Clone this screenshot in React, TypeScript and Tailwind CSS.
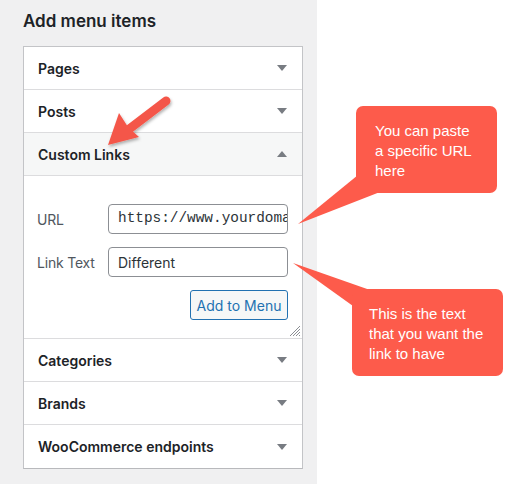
const sections = [
  { title: 'Pages', open: false },
  { title: 'Posts', open: false },
  { title: 'Custom Links', open: true },
  { title: 'Categories', open: false },
  { title: 'Brands', open: false },
  { title: 'WooCommerce endpoints', open: false },
];

function Caret({ up }: { up?: boolean }) {
  return (
    <svg width="10" height="6" viewBox="0 0 10 6" className="shrink-0">
      <polygon points={up ? '0,6 10,6 5,0' : '0,0 10,0 5,6'} fill="#787c82" />
    </svg>
  );
}

function CustomLinksBody() {
  return (
    <div className="relative border-b border-[#dcdcde] px-[13px] pt-[28px] pb-[18px]">
      <div className="flex items-center">
        <label className="w-[71px] text-[14px] tracking-[-0.2px] text-[#50575e]">URL</label>
        <div className="flex h-[30px] w-[180px] items-center overflow-hidden whitespace-nowrap rounded-[4px] border border-[#8c8f94] bg-white px-[9px] font-['Liberation_Mono',monospace] text-[14.4px] text-[#2c3338]">
          https://www.yourdomain.com
        </div>
      </div>
      <div className="mt-[13px] flex items-center">
        <label className="w-[71px] text-[14px] tracking-[-0.2px] text-[#50575e]">Link Text</label>
        <div className="flex h-[30px] w-[180px] items-center rounded-[4px] border border-[#8c8f94] bg-white px-[9px] text-[14px] text-[#2c3338]">
          Different
        </div>
      </div>
      <div className="mt-[13px] flex justify-end pr-[1px]">
        <button className="h-[30px] w-[98px] rounded-[3px] border border-[#2271b1] bg-[#f6f7f7] text-[14px] text-[#2271b1]">
          Add to Menu
        </button>
      </div>
      <svg width="12" height="12" viewBox="0 0 12 12" className="absolute right-[1px] bottom-[1px]">
        <path d="M11 1 L1 11 M11 4 L4 11 M11 7 L7 11 M11 10 L10 11" stroke="#8c8f94" strokeWidth="1" />
      </svg>
    </div>
  );
}

function MenuPanel() {
  return (
    <div className="h-[484px] w-[317px] bg-[#f0f0f1] pl-[23px] pt-[9px] font-['Inter',sans-serif]">
      <h2 className="text-[17px] leading-[24px] font-semibold text-[#1d2327]">Add menu items</h2>
      <div className="mt-[13px] w-[280px] border border-[#c3c4c7] border-b-[#b8b9bc] bg-white">
        {sections.map((s, i) => (
          <div key={s.title}>
            <div
              className={`flex h-[43px] items-center justify-between pl-[14px] pr-[15px] ${
                i < sections.length - 1 || s.open ? 'border-b border-[#dcdcde]' : ''
              } ${s.open ? 'bg-[#f6f7f7]' : ''}`}
            >
              <span className="text-[14px] font-semibold text-[#1d2327]">{s.title}</span>
              <Caret up={s.open} />
            </div>
            {s.open && <CustomLinksBody />}
          </div>
        ))}
      </div>
    </div>
  );
}

function Annotations() {
  return (
    <>
      <svg width="529" height="490" className="pointer-events-none absolute inset-0">
        <defs>
          <filter id="sh" x="-20%" y="-20%" width="140%" height="140%">
            <feDropShadow dx="1" dy="2" stdDeviation="1.5" floodColor="#000" floodOpacity="0.3" />
          </filter>
        </defs>
        <g filter="url(#sh)" fill="#f4574a">
          <line x1="166" y1="101" x2="124" y2="133" stroke="#f4574a" strokeWidth="9" strokeLinecap="round" />
          <polygon points="108,145 119,113 128,127 139,137" />
        </g>
        <polygon points="358,175 298,224 380,192" fill="#fd5b4b" />
        <polygon points="293,263 370,290 353,306" fill="#fd5b4b" />
      </svg>
      <div className="absolute left-[356px] top-[106px] h-[87px] w-[141px] rounded-[7px] bg-[#fd5b4b] pl-[19px] pt-[15px] font-['Liberation_Sans',sans-serif] text-[15px] leading-[20px] text-white">
        You can paste
        <br />a specific URL
        <br />here
      </div>
      <div className="absolute left-[352px] top-[289px] h-[87px] w-[151px] rounded-[7px] bg-[#fd5b4b] pl-[17px] pt-[15px] font-['Liberation_Sans',sans-serif] text-[15px] leading-[20px] text-white">
        This is the text
        <br />that you want the
        <br />link to have
      </div>
    </>
  );
}

export default function App() {
  return (
    <div className="relative h-[490px] w-[529px] overflow-hidden bg-white">
      <MenuPanel />
      <Annotations />
    </div>
  );
}
